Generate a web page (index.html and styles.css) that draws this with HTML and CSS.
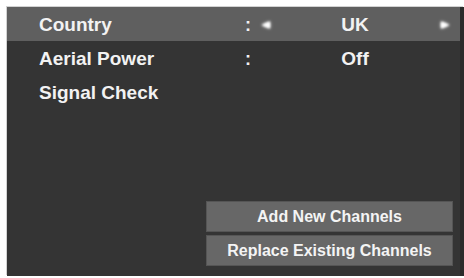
FILE: index.html
```html
<!DOCTYPE html>
<html>
<head>
<meta charset="utf-8">
<link rel="stylesheet" href="styles.css">
</head>
<body>
<div class="panel">
  <div class="row row-active">
    <span class="label">Country</span>
    <span class="colon">:</span>
    <span class="arrow"><svg width="12" height="10" viewBox="0 0 12 10"><polygon points="1.5,5 10,1.5 10,8.5" fill="#fff"/></svg></span>
    <span class="value">UK</span>
    <span class="arrow"><svg width="12" height="10" viewBox="0 0 12 10"><polygon points="10.5,5 2,1.5 2,8.5" fill="#fff"/></svg></span>
  </div>
  <div class="row">
    <span class="label">Aerial Power</span>
    <span class="colon">:</span>
    <span class="arrow"></span>
    <span class="value">Off</span>
    <span class="arrow"></span>
  </div>
  <div class="row">
    <span class="label">Signal Check</span>
  </div>
  <div class="buttons">
    <div class="btn">Add New Channels</div>
    <div class="btn">Replace Existing Channels</div>
  </div>
</div>
</body>
</html>
```

FILE: styles.css
```css
html, body {
  margin: 0;
  padding: 0;
  background: #ffffff;
}
body {
  width: 464px;
  height: 278px;
  overflow: hidden;
  font-family: "Liberation Sans", Arial, sans-serif;
}
.panel {
  margin: 7px 0 0 7px;
  height: 269px;
  background: #343434;
  box-shadow: -1px -1px 0 #d2d2d2;
  display: flex;
  flex-direction: column;
  border-right: 4px solid #2b2b2b;
  box-sizing: border-box;
}
.row {
  height: 34px;
  box-sizing: border-box;
  padding-top: 2px;
  display: grid;
  grid-template-columns: 206px 14px 13px 166px 14px;
  align-items: center;
  padding-left: 32px;
  color: #f2f2f2;
  font-weight: bold;
  font-size: 19px;
}
.row-active {
  background: #5f5f5f;
}
.colon {
  font-size: 18px;
}
.arrow {
  display: flex;
  justify-content: center;
  align-items: center;
}
.arrow svg {
  filter: blur(0.9px) drop-shadow(0 0 1.5px #fff);
}
.value {
  text-align: center;
}
.buttons {
  margin-top: auto;
  margin-bottom: 10px;
  align-self: flex-end;
  margin-right: 7px;
  display: flex;
  flex-direction: column;
  gap: 3px;
  width: 247px;
}
.btn {
  height: 31px;
  box-sizing: border-box;
  background: #676767;
  border: 1px solid #555555;
  color: #f4f4f4;
  font-weight: bold;
  font-size: 16px;
  display: flex;
  align-items: center;
  justify-content: center;
}
```
